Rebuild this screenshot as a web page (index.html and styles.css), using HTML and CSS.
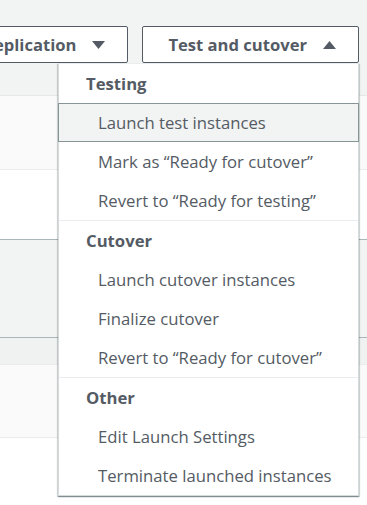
FILE: index.html
```html
<!DOCTYPE html>
<html>
<head>
<meta charset="utf-8">
<link rel="stylesheet" href="styles.css">
</head>
<body>
<div class="page">
  <div class="toolbar">
    <button class="btn">Replication <svg class="caret" width="13" height="8" viewBox="0 0 13 8"><path d="M0 0H13L6.5 8Z"/></svg></button>
    <button class="btn">Test and cutover <svg class="caret" width="13" height="8" viewBox="0 0 13 8"><path d="M0 8H13L6.5 0Z"/></svg></button>
  </div>
  <div class="table">
    <div class="row r-head"></div>
    <div class="row r-light"></div>
    <div class="row r-white"></div>
    <div class="row r-gray"></div>
    <div class="row r-sub"></div>
    <div class="row r-light2"></div>
    <div class="row r-end"></div>
  </div>

  <div class="menu">
    <div class="group">
      <div class="ghead">Testing</div>
      <div class="item active">Launch test instances</div>
      <div class="item">Mark as “Ready for cutover”</div>
      <div class="item">Revert to “Ready for testing”</div>
    </div>
    <div class="group">
      <div class="ghead">Cutover</div>
      <div class="item">Launch cutover instances</div>
      <div class="item">Finalize cutover</div>
      <div class="item">Revert to “Ready for cutover”</div>
    </div>
    <div class="group">
      <div class="ghead">Other</div>
      <div class="item">Edit Launch Settings</div>
      <div class="item">Terminate launched instances</div>
    </div>
  </div>
</div>
</body>
</html>
```

FILE: styles.css
```css
html, body {
  margin: 0;
  padding: 0;
  background: #ffffff;
  overflow: hidden;
}
body {
  font-family: "Open Sans", "Noto Sans", sans-serif;
  color: #545b64;
  width: 367px;
  height: 505px;
}
.page {
  position: relative;
  width: 367px;
  height: 505px;
}
.toolbar {
  height: 63px;
  box-sizing: border-box;
  padding: 26px 8px 0 0;
  background: #f2f3f3;
  display: flex;
  justify-content: flex-end;
  gap: 14px;
}
.btn {
  flex-shrink: 0;
  height: 37px;
  box-sizing: border-box;
  border: 1px solid #545b64;
  border-radius: 2px;
  background: #ffffff;
  color: #545b64;
  font-family: inherit;
  font-weight: 700;
  font-size: 16.6px;
  padding: 0 22px 0 25px;
  display: flex;
  align-items: center;
  gap: 16px;
  white-space: nowrap;
}
.caret {
  fill: #545b64;
  display: block;
}
.table {
  display: flex;
  flex-direction: column;
}
.row {
  box-sizing: border-box;
}
.r-head { height: 33px; background: #f2f3f3; border-bottom: 1px solid #e6e8e8; }
.r-light { height: 74px; background: #fafafa; border-bottom: 1px solid #eaeded; }
.r-white { height: 70px; background: #ffffff; border-bottom: 1px solid #aab7b8; }
.r-gray { height: 98px; background: #f2f3f3; border-bottom: 1px solid #aab7b8; }
.r-sub { height: 27px; background: #f0f1f1; border-bottom: 1px solid #eaeded; }
.r-light2 { height: 73px; background: #fafafa; border-bottom: 1px solid #eaeded; }
.r-end { height: 68px; background: #ffffff; }

.menu {
  position: absolute;
  left: 58px;
  top: 63px;
  width: 301px;
  box-sizing: border-box;
  background: #ffffff;
  border: 1px solid #d5dbdb;
  border-top: 1px solid #eaeded;
  box-shadow: 0 1px 1px 0 rgba(0, 28, 36, 0.3), 1px 1px 1px 0 rgba(0, 28, 36, 0.15), -1px 1px 1px 0 rgba(0, 28, 36, 0.15);
  font-size: 16.7px;
}
.group + .group {
  border-top: 1px solid #eaeded;
}
.ghead {
  height: 39px;
  box-sizing: border-box;
  padding-left: 27px;
  display: flex;
  align-items: center;
  font-weight: 700;
}
.item {
  height: 39px;
  box-sizing: border-box;
  padding-left: 39px;
  display: flex;
  align-items: center;
  white-space: nowrap;
  border: 1px solid transparent;
  border-left: none;
  border-right: none;
}
.item.active {
  background: #f2f3f3;
  border: 1px solid #879596;
  margin: 0 -1px;
  padding-left: 39px;
}
```
